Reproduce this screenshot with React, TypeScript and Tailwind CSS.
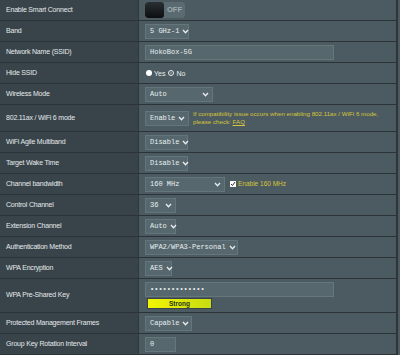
import React from 'react';

const Chevron: React.FC = () => (
  <svg width="7" height="5" viewBox="0 0 7 5" className="shrink-0">
    <polyline points="1,1 3.5,3.8 6,1" fill="none" stroke="#e8eef0" strokeWidth="1.3" />
  </svg>
);

const Select: React.FC<{ value: string; width: string }> = ({ value, width }) => (
  <div
    className={`flex items-center justify-between gap-[3px] h-[15px] ${width} pl-[4px] pr-[3px] bg-[#56686e] border border-[#64767b] text-[#e9eef0] text-[7px] font-['Liberation_Mono',monospace]`}
  >
    <span className="whitespace-pre leading-none">{value}</span>
    <Chevron />
  </div>
);

const TextInput: React.FC<{ value: string; width: string }> = ({ value, width }) => (
  <div
    className={`flex items-center h-[15px] ${width} px-[4px] bg-[#56676d] border border-[#66777c] text-[#e9eef0] text-[7px] font-['Liberation_Mono',monospace]`}
  >
    <span className="leading-none whitespace-pre">{value}</span>
  </div>
);

interface Row {
  label: string;
  height: string;
  content: React.ReactNode;
}

const rows: Row[] = [
  {
    label: 'Enable Smart Connect',
    height: 'h-[21px]',
    content: (
      <div className="flex items-center h-[16px] w-[40px] rounded-[3px] bg-[#596a70] overflow-hidden">
        <div className="h-full w-[19px] rounded-[3px] bg-gradient-to-b from-[#2a3033] to-[#0c0f10]" />
        <span className="ml-[3px] text-[7.5px] font-bold text-[#a0abaf] font-['Liberation_Sans',sans-serif]">OFF</span>
      </div>
    ),
  },
  { label: 'Band', height: 'h-[21px]', content: <Select value="5 GHz-1" width="w-[44px]" /> },
  { label: 'Network Name (SSID)', height: 'h-[21px]', content: <TextInput value="HokoBox-5G" width="w-[189px]" /> },
  {
    label: 'Hide SSID',
    height: 'h-[21px]',
    content: (
      <div className="flex items-center text-[7px] text-[#e9eef0] font-['Liberation_Sans',sans-serif] pl-[1px]">
        <span className="w-[6px] h-[6px] rounded-full bg-white" />
        <span className="ml-[2px] mt-[2px]">Yes</span>
        <span className="ml-[3px] w-[6px] h-[6px] rounded-full border-[1.5px] border-[#e9eef0] flex items-center justify-center">
          <span className="w-[2px] h-[2px] rounded-full bg-[#8a9599]" />
        </span>
        <span className="ml-[2px] mt-[2px]">No</span>
      </div>
    ),
  },
  { label: 'Wireless Mode', height: 'h-[21px]', content: <Select value="Auto" width="w-[68px]" /> },
  {
    label: '802.11ax / WiFi 6 mode',
    height: 'h-[27px]',
    content: (
      <div className="flex items-center">
        <Select value="Enable" width="w-[44px]" />
        <div className="ml-[4px] text-[6.2px] leading-[8px] text-[#d8c43c] font-['Liberation_Sans',sans-serif]">
          <div>If compatibility issue occurs when enabling 802.11ax / WiFi 6 mode,</div>
          <div>
            please check: <span className="underline">FAQ</span>
          </div>
        </div>
      </div>
    ),
  },
  { label: 'WiFi Agile Multiband', height: 'h-[21px]', content: <Select value="Disable" width="w-[43px]" /> },
  { label: 'Target Wake Time', height: 'h-[21px]', content: <Select value="Disable" width="w-[43px]" /> },
  {
    label: 'Channel bandwidth',
    height: 'h-[21px]',
    content: (
      <div className="flex items-center">
        <Select value="160 MHz" width="w-[80px]" />
        <span className="ml-[5px] w-[6px] h-[6px] bg-white flex items-center justify-center">
          <svg width="6" height="6" viewBox="0 0 6 6">
            <polyline points="1,3 2.5,4.5 5,1" fill="none" stroke="#333" strokeWidth="1" />
          </svg>
        </span>
        <span className="ml-[2px] text-[6.5px] text-[#d8c43c] font-['Liberation_Sans',sans-serif]">Enable 160 MHz</span>
      </div>
    ),
  },
  { label: 'Control Channel', height: 'h-[21px]', content: <Select value="36" width="w-[31px]" /> },
  { label: 'Extension Channel', height: 'h-[21px]', content: <Select value="Auto" width="w-[31px]" /> },
  { label: 'Authentication Method', height: 'h-[21px]', content: <Select value="WPA2/WPA3-Personal" width="w-[93px]" /> },
  { label: 'WPA Encryption', height: 'h-[21px]', content: <Select value="AES" width="w-[27px]" /> },
  {
    label: 'WPA Pre-Shared Key',
    height: 'h-[34px]',
    content: (
      <div className="flex flex-col">
        <TextInput value="•••••••••••••" width="w-[189px]" />
        <div className="ml-[2px] mt-[1px] flex items-center justify-center h-[11px] w-[65px] border border-[#3b4447] bg-gradient-to-r from-[#f2f500] to-[#c7dc12] text-[6.5px] font-bold text-[#2b3416] font-['Liberation_Sans',sans-serif]">
          Strong
        </div>
      </div>
    ),
  },
  { label: 'Protected Management Frames', height: 'h-[21px]', content: <Select value="Capable" width="w-[47px]" /> },
  { label: 'Group Key Rotation Interval', height: 'h-[21px]', content: <TextInput value="0" width="w-[31px]" /> },
];

export default function App() {
  return (
    <div className="w-[400px] h-[355px] overflow-hidden bg-[#4b5b61] font-['Liberation_Sans',sans-serif]">
      <div className="w-[398px] border-r-2 border-[#2d3539]">
        {rows.map((row, i) => (
          <div key={i} className={`flex ${row.height} border-b border-[#2b3337]`}>
            <div className="w-[139px] shrink-0 flex items-center pl-[6px] bg-[#39444a] border-r border-[#2f383c] text-[7px] tracking-[-0.2px] text-[#e4e9eb]">
              {row.label}
            </div>
            <div className="flex-1 flex items-center pl-[6px] bg-[#4b5b61]">{row.content}</div>
          </div>
        ))}
      </div>
    </div>
  );
}
